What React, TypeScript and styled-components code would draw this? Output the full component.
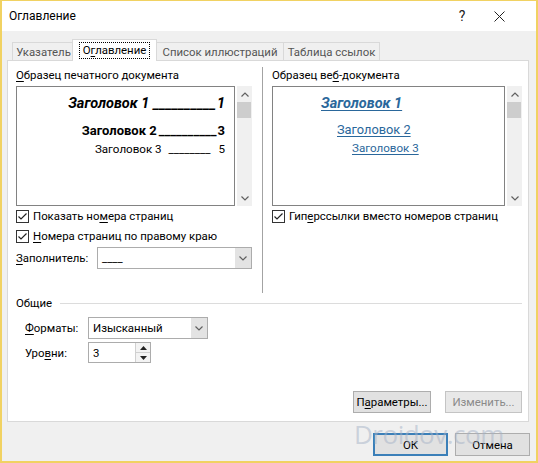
import styled, { createGlobalStyle } from "styled-components";

const GlobalStyle = createGlobalStyle`
  html, body {
    margin: 0;
    padding: 0;
    background: #fff;
  }
  body {
    font-family: Roboto, "Noto Sans", "Liberation Sans", sans-serif;
    font-size: 11.4px;
    color: #000;
  }
  * {
    box-sizing: border-box;
  }
`;

const Window = styled.div`
  position: relative;
  width: 538px;
  height: 463px;
  border: 2px solid #f1d262;
  border-top-width: 1px;
  background: #f0f0f0;
  display: flex;
  flex-direction: column;
  overflow: hidden;
`;

const TitleBar = styled.div`
  height: 30px;
  background: #fff;
  display: flex;
  align-items: center;
  padding-left: 7px;
`;

const TitleText = styled.div`
  flex: 1;
  font-size: 12px;
`;

const HelpButton = styled.div`
  width: 30px;
  text-align: center;
  font-size: 14px;
  color: #222;
`;

const CloseButton = styled.div`
  width: 44px;
  margin-right: 15px;
  display: flex;
  justify-content: center;
`;

const Body = styled.div`
  flex: 1;
  display: flex;
  flex-direction: column;
  padding: 8px 6px 0 5px;
`;

const TabStrip = styled.div`
  display: flex;
  align-items: flex-end;
  padding-left: 5px;
  height: 21px;
`;

const Tab = styled.div<{ $active?: boolean; $w: number }>`
  position: relative;
  z-index: ${(p) => (p.$active ? 1 : 0)};
  width: ${(p) => p.$w}px;
  height: ${(p) => (p.$active ? 22 : 18)}px;
  margin: 0 ${(p) => (p.$active ? -2 : 0)}px ${(p) => (p.$active ? -1 : 0)}px;
  background: ${(p) => (p.$active ? "#fff" : "#f0f0f0")};
  border: 1px solid #d9d9d9;
  border-bottom: none;
  margin-right: -1px;
  color: ${(p) => (p.$active ? "#000" : "#555")};
  display: flex;
  align-items: center;
  justify-content: center;
  white-space: nowrap;
`;

const FocusRect = styled.span`
  outline: 1px dotted #000;
  padding: 0 3px;
  line-height: 15px;
`;

const Panel = styled.div`
  height: 362px;
  margin-right: 1px;
  background: #fff;
  border: 1px solid #d9d9d9;
  padding: 6px 6px 0 8px;
  display: flex;
  flex-direction: column;
`;

const TopSection = styled.div`
  display: flex;
  height: 226px;
`;

const Column = styled.div<{ $w?: number }>`
  display: flex;
  flex-direction: column;
  ${(p) => (p.$w ? `width: ${p.$w}px;` : "flex: 1;")}
`;

const Separator = styled.div`
  width: 1px;
  background: #a3a3a3;
  margin: 0 9px 0 10px;
`;

const Label = styled.div`
  height: 16px;
  line-height: 16px;
  white-space: nowrap;
`;

const Key = styled.span`
  text-decoration: underline;
  text-underline-offset: 2px;
`;

const PreviewRow = styled.div`
  display: flex;
  gap: 2px;
  height: 120px;
  margin-top: 3px;
`;

const PreviewBox = styled.div<{ $align: "left" | "right" }>`
  flex: 1;
  border: 1px solid #828282;
  background: #fff;
  padding: 8px 9px 0 0;
  text-align: ${(p) => p.$align};
  white-space: nowrap;
`;

const PrintLine = styled.div<{ $size: number; $lh: number; $mt: number; $bold?: boolean; $italic?: boolean }>`
  font-size: ${(p) => p.$size}px;
  line-height: ${(p) => p.$lh}px;
  margin-top: ${(p) => p.$mt}px;
  font-weight: ${(p) => (p.$bold ? 700 : 400)};
  font-style: ${(p) => (p.$italic ? "italic" : "normal")};
  color: #000;
`;

const Leader = styled.span<{ $left: number; $right: number }>`
  margin: 0 ${(p) => p.$right}px 0 ${(p) => p.$left}px;
`;

const WebLine = styled.div<{ $size: number; $lh: number; $mt: number; $indent: number; $bold?: boolean; $italic?: boolean }>`
  font-size: ${(p) => p.$size}px;
  line-height: ${(p) => p.$lh}px;
  margin-top: ${(p) => p.$mt}px;
  padding-left: ${(p) => p.$indent}px;
  font-weight: ${(p) => (p.$bold ? 700 : 400)};
  font-style: ${(p) => (p.$italic ? "italic" : "normal")};
  color: #2a679b;
  text-decoration: underline;
  text-underline-offset: 2px;
`;

const Scrollbar = styled.div`
  width: 15px;
  background: #f0f0f0;
  display: flex;
  flex-direction: column;
  align-items: stretch;
`;

const ScrollArrow = styled.div`
  height: 16px;
  display: flex;
  align-items: center;
  justify-content: center;
`;

const ScrollThumb = styled.div`
  height: 16px;
  margin: 0 1px 0 0;
  background: #cdcdcd;
`;

const ScrollTrack = styled.div`
  flex: 1;
`;

const CheckRow = styled.div`
  height: 20px;
  display: flex;
  align-items: center;
  gap: 4px;
  white-space: nowrap;
`;

const CheckBox = styled.div`
  width: 13px;
  height: 13px;
  border: 1px solid #333;
  background: #fff;
  display: flex;
  align-items: center;
  justify-content: center;
`;

const FieldRow = styled.div<{ $labelW: number; $mt: number; $h: number }>`
  display: flex;
  align-items: center;
  height: ${(p) => p.$h}px;
  margin-top: ${(p) => p.$mt}px;

  & > :first-child {
    width: ${(p) => p.$labelW}px;
  }
`;

const Combo = styled.div<{ $w?: number }>`
  ${(p) => (p.$w ? `width: ${p.$w}px;` : "flex: 1;")}
  height: 100%;
  border: 1px solid #acacac;
  background: #fff;
  display: flex;
`;

const ComboValue = styled.div`
  flex: 1;
  padding-left: 4px;
  display: flex;
  align-items: center;
  white-space: nowrap;
`;

const ComboButton = styled.div`
  width: 16px;
  background: #e3e3e3;
  display: flex;
  align-items: center;
  justify-content: center;
`;

const SpinButtons = styled.div`
  width: 15px;
  border-left: 1px solid #d0d0d0;
  display: flex;
  flex-direction: column;
`;

const SpinHalf = styled.div<{ $top?: boolean }>`
  flex: 1;
  background: #f3f3f3;
  border-bottom: ${(p) => (p.$top ? "1px solid #d0d0d0" : "none")};
  display: flex;
  align-items: center;
  justify-content: center;
`;

const GroupHeader = styled.div`
  display: flex;
  align-items: center;
  height: 16px;
  margin-top: 2px;
`;

const GroupLine = styled.div`
  flex: 1;
  height: 1px;
  background: #dcdcdc;
  margin-left: 8px;
`;

const FormBlock = styled.div`
  padding-left: 9px;
  margin-top: 6px;
  display: flex;
  flex-direction: column;
  gap: 3px;
`;

const ButtonRow = styled.div<{ $mt: number; $gap: number }>`
  display: flex;
  justify-content: flex-end;
  gap: ${(p) => p.$gap}px;
  margin-top: ${(p) => p.$mt}px;
`;

const Button = styled.div<{ $w: number; $h: number; $default?: boolean; $disabled?: boolean }>`
  width: ${(p) => p.$w}px;
  height: ${(p) => p.$h}px;
  background: ${(p) => (p.$disabled ? "#e8e8e8" : "#e1e1e1")};
  border: ${(p) => (p.$default ? "2px solid #3b7fb8" : p.$disabled ? "1px solid #c4c4c4" : "1px solid #adadad")};
  color: ${(p) => (p.$disabled ? "#8a8a8a" : "#000")};
  display: flex;
  align-items: center;
  justify-content: center;
  white-space: nowrap;
`;

const Watermark = styled.div`
  position: absolute;
  left: 352px;
  top: 415px;
  font-family: "Open Sans", "Noto Sans", sans-serif;
  font-size: 26px;
  letter-spacing: -0.5px;
  color: rgba(165, 178, 198, 0.5);
  pointer-events: none;
`;

const Chevron = ({ dir }: { dir: "up" | "down" }) => (
  <svg width="8" height="5" viewBox="0 0 8 5">
    <polyline
      points={dir === "up" ? "0.5,4.5 4,1 7.5,4.5" : "0.5,0.5 4,4 7.5,0.5"}
      fill="none"
      stroke="#606060"
      strokeWidth="1.2"
    />
  </svg>
);

const Triangle = ({ dir }: { dir: "up" | "down" }) => (
  <svg width="7" height="4" viewBox="0 0 7 4">
    <polygon points={dir === "up" ? "0,4 3.5,0 7,4" : "0,0 3.5,4 7,0"} fill="#222" />
  </svg>
);

const Check = () => (
  <svg width="11" height="11" viewBox="0 0 11 11">
    <polyline points="1.5,5.5 4,8 9.5,2.5" fill="none" stroke="#222" strokeWidth="1.2" />
  </svg>
);

const ScrollBar = () => (
  <Scrollbar>
    <ScrollArrow>
      <Chevron dir="up" />
    </ScrollArrow>
    <ScrollThumb />
    <ScrollTrack />
    <ScrollArrow>
      <Chevron dir="down" />
    </ScrollArrow>
  </Scrollbar>
);

const tabs = [
  { label: "Указатель", w: 63 },
  { label: "Оглавление", w: 85, active: true },
  { label: "Список иллюстраций", w: 128 },
  { label: "Таблица ссылок", w: 97 },
];

export default function App() {
  return (
    <>
      <GlobalStyle />
      <Window>
        <TitleBar>
          <TitleText>Оглавление</TitleText>
          <HelpButton>?</HelpButton>
          <CloseButton>
            <svg width="11" height="11" viewBox="0 0 11 11">
              <path d="M0.5 0.5 L10.5 10.5 M10.5 0.5 L0.5 10.5" stroke="#222" strokeWidth="1" />
            </svg>
          </CloseButton>
        </TitleBar>
        <Body>
          <TabStrip>
            {tabs.map((t) => (
              <Tab key={t.label} $w={t.w} $active={t.active}>
                {t.active ? (
                  <FocusRect>
                    О<Key>г</Key>лавление
                  </FocusRect>
                ) : (
                  t.label
                )}
              </Tab>
            ))}
          </TabStrip>
          <Panel>
            <TopSection>
              <Column $w={236}>
                <Label>
                  <Key>О</Key>бразец печатного документа
                </Label>
                <PreviewRow>
                  <PreviewBox $align="right">
                    <PrintLine $size={14.5} $lh={18} $mt={0} $bold $italic>
                      Заголовок 1<Leader $left={4} $right={1}>__________</Leader>1
                    </PrintLine>
                    <PrintLine $size={13} $lh={16} $mt={10} $bold>
                      Заголовок 2<Leader $left={2} $right={1}>__________</Leader>3
                    </PrintLine>
                    <PrintLine $size={11.6} $lh={14} $mt={3}>
                      Заголовок 3<Leader $left={7} $right={8}>________</Leader>5
                    </PrintLine>
                  </PreviewBox>
                  <ScrollBar />
                </PreviewRow>
                <CheckRow>
                  <CheckBox>
                    <Check />
                  </CheckBox>
                  <span>
                    Показать но<Key>м</Key>ера страниц
                  </span>
                </CheckRow>
                <CheckRow>
                  <CheckBox>
                    <Check />
                  </CheckBox>
                  <span>
                    <Key>Н</Key>омера страниц по правому краю
                  </span>
                </CheckRow>
                <FieldRow $labelW={81} $mt={1} $h={22}>
                  <span>
                    <Key>З</Key>аполнитель:
                  </span>
                  <Combo>
                    <ComboValue>____</ComboValue>
                    <ComboButton>
                      <Chevron dir="down" />
                    </ComboButton>
                  </Combo>
                </FieldRow>
              </Column>
              <Separator />
              <Column>
                <Label>
                  Образец ве<Key>б</Key>-документа
                </Label>
                <PreviewRow>
                  <PreviewBox $align="left">
                    <WebLine $size={14.5} $lh={18} $mt={0} $indent={48} $bold $italic>
                      Заголовок 1
                    </WebLine>
                    <WebLine $size={12.8} $lh={16} $mt={9} $indent={64}>
                      Заголовок 2
                    </WebLine>
                    <WebLine $size={11.6} $lh={14} $mt={3} $indent={79}>
                      Заголовок 3
                    </WebLine>
                  </PreviewBox>
                  <ScrollBar />
                </PreviewRow>
                <CheckRow>
                  <CheckBox>
                    <Check />
                  </CheckBox>
                  <span>
                    Гип<Key>е</Key>рссылки вместо номеров страниц
                  </span>
                </CheckRow>
              </Column>
            </TopSection>
            <GroupHeader>
              <span>Общие</span>
              <GroupLine />
            </GroupHeader>
            <FormBlock>
              <FieldRow $labelW={63} $mt={0} $h={22}>
                <span>
                  <Key>Ф</Key>орматы:
                </span>
                <Combo $w={120}>
                  <ComboValue>Изысканный</ComboValue>
                  <ComboButton>
                    <Chevron dir="down" />
                  </ComboButton>
                </Combo>
              </FieldRow>
              <FieldRow $labelW={63} $mt={0} $h={21}>
                <span>
                  Уро<Key>в</Key>ни:
                </span>
                <Combo $w={63}>
                  <ComboValue>3</ComboValue>
                  <SpinButtons>
                    <SpinHalf $top>
                      <Triangle dir="up" />
                    </SpinHalf>
                    <SpinHalf>
                      <Triangle dir="down" />
                    </SpinHalf>
                  </SpinButtons>
                </Combo>
              </FieldRow>
            </FormBlock>
            <ButtonRow $mt={28} $gap={14}>
              <Button $w={78} $h={22}>
                П<Key>а</Key>раметры...
              </Button>
              <Button $w={77} $h={22} $disabled>
                Изменить...
              </Button>
            </ButtonRow>
          </Panel>
          <ButtonRow $mt={11} $gap={7}>
            <Button $w={75} $h={23} $default>
              ОК
            </Button>
            <Button $w={75} $h={23}>
              Отмена
            </Button>
          </ButtonRow>
        </Body>
        <Watermark>Droidov.com</Watermark>
      </Window>
    </>
  );
}
